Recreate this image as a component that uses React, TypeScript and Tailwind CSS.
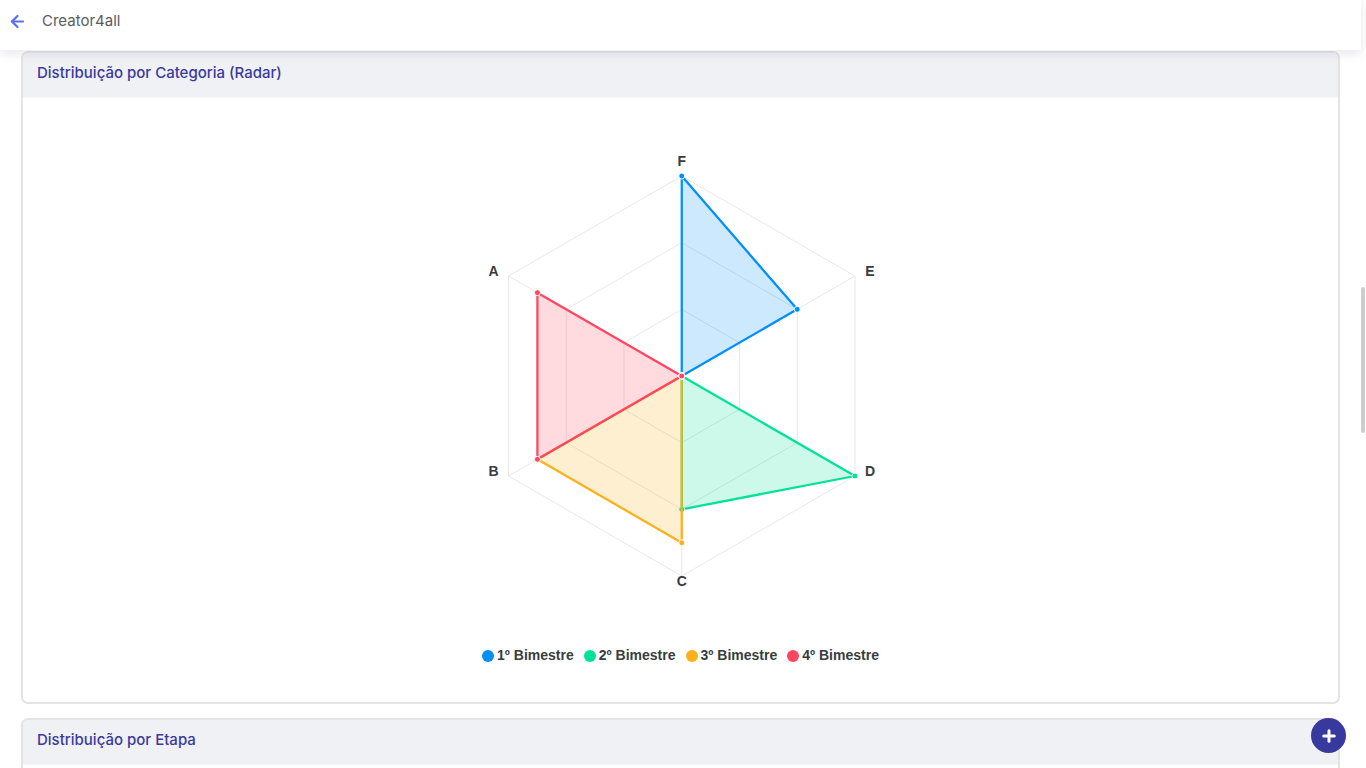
import React from 'react';
import { ArrowLeft, Plus } from 'lucide-react';

const CX = 210.75;
const CY = 226;
const R = 200;

// angle order matches the labels around the radar, F on top, clockwise
const AXES = [
  { label: 'F', deg: 0, lx: 0, ly: -10 },
  { label: 'E', deg: 60, lx: 15, ly: 0 },
  { label: 'D', deg: 120, lx: 15, ly: 0 },
  { label: 'C', deg: 180, lx: 0, ly: 10 },
  { label: 'B', deg: 240, lx: -15, ly: 0 },
  { label: 'A', deg: 300, lx: -15, ly: 0 },
];

const SERIES = [
  { name: '1º Bimestre', color: '#008ffb', values: [6, 4, 0, 0, 0, 0] },
  { name: '2º Bimestre', color: '#00e396', values: [0, 0, 6, 4, 0, 0] },
  { name: '3º Bimestre', color: '#feb019', values: [0, 0, 0, 5, 5, 0] },
  { name: '4º Bimestre', color: '#ff4560', values: [0, 0, 0, 0, 5, 5] },
];

function point(deg: number, r: number) {
  const a = (deg * Math.PI) / 180;
  return [CX + r * Math.sin(a), CY - r * Math.cos(a)];
}

function seriesPoints(values: number[]) {
  return AXES.map((a, i) => point(a.deg, (R * values[i]) / 6));
}

function RadarChart() {
  return (
    <svg width={420} height={470} className="block">
      {[1, 2, 3].map((level) => (
        <polygon
          key={level}
          points={AXES.map((a) => point(a.deg, (R * level) / 3).join(',')).join(' ')}
          fill="none"
          stroke="#e8e8e8"
          strokeWidth={1}
        />
      ))}
      {AXES.map((a) => {
        const [x, y] = point(a.deg, R);
        return <line key={a.label} x1={CX} y1={CY} x2={x} y2={y} stroke="#e8e8e8" strokeWidth={1} />;
      })}
      {SERIES.map((s, index) => (
        <g key={s.name}>
          {/* the green fill goes over the orange line, see below */}
          <polygon
            points={seriesPoints(s.values).map((p) => p.join(',')).join(' ')}
            fill={s.color}
            fillOpacity={index === 1 ? 0 : 0.2}
            stroke={s.color}
            strokeWidth={2.25}
            strokeLinejoin="round"
          />
          {seriesPoints(s.values).map(([x, y], i) => (
            <circle key={i} cx={x} cy={y} r={3} fill={s.color} stroke="#fff" strokeWidth={1} />
          ))}
          {index === 2 && (
            <polygon
              points={seriesPoints(SERIES[1].values).map((p) => p.join(',')).join(' ')}
              fill={SERIES[1].color}
              fillOpacity={0.2}
            />
          )}
        </g>
      ))}
      {AXES.map((a) => {
        const [x, y] = point(a.deg, R);
        return (
          <text
            key={a.label}
            x={x + a.lx}
            y={y + a.ly}
            textAnchor="middle"
            fill="#373d3f"
            className="font-['Liberation_Sans',sans-serif] text-[14px] font-bold"
          >
            {a.label}
          </text>
        );
      })}
    </svg>
  );
}

function CardHeader({ title }: { title: string }) {
  return (
    <div className="h-11 flex items-center px-[14px] pb-[3px] bg-[#f0f1f5] rounded-t-[5px] shadow-[0_1px_2px_rgba(0,0,0,0.04)]">
      <h2 className="text-[15px] font-medium text-[#3a3a9c] font-['Inter',sans-serif]">{title}</h2>
    </div>
  );
}

export default function App() {
  return (
    <div className="relative h-screen overflow-hidden bg-white font-['Inter',sans-serif]">
      <header className="w-[1361px] h-[50px] flex items-center bg-white shadow-[0_3px_10px_rgba(80,80,130,0.14)] relative z-10 pb-[7px]">
        <ArrowLeft className="ml-[8px] text-[#5b6ef5]" size={19} strokeWidth={2.8} />
        <span className="ml-[15px] text-[15px] text-[#5c5c5c]">Creator4all</span>
      </header>

      <main className="w-[1361px] pl-[21px] pr-[21px] pt-px flex flex-col gap-[14px]">
        <section className="h-[653px] bg-white border-2 border-[#e4e4e4] rounded-[7px] flex flex-col">
          <CardHeader title="Distribuição por Categoria (Radar)" />
          <div className="flex-1 flex flex-col items-center">
            <div className="mt-[53px]">
              <RadarChart />
            </div>
            <div className="mt-[25px] flex items-center gap-[10px] font-['Liberation_Sans',sans-serif] text-[14px] font-bold text-[#373d3f]">
              {SERIES.map((s) => (
                <div key={s.name} className="flex items-center gap-[3px]">
                  <span className="w-3 h-3 rounded-full" style={{ backgroundColor: s.color }} />
                  <span>{s.name}</span>
                </div>
              ))}
            </div>
          </div>
        </section>

        <section className="h-[300px] bg-white border-2 border-[#e4e4e4] rounded-[7px]">
          <CardHeader title="Distribuição por Etapa" />
        </section>
      </main>

      <div className="absolute right-px top-[287px] w-[4px] h-[146px] rounded-full bg-[#cdcdcd]" />
      <button className="absolute left-[1311px] top-[718px] w-[35px] h-[35px] rounded-full bg-[#373a9c] flex items-center justify-center text-white z-20">
        <Plus size={18} strokeWidth={4} />
      </button>
    </div>
  );
}
